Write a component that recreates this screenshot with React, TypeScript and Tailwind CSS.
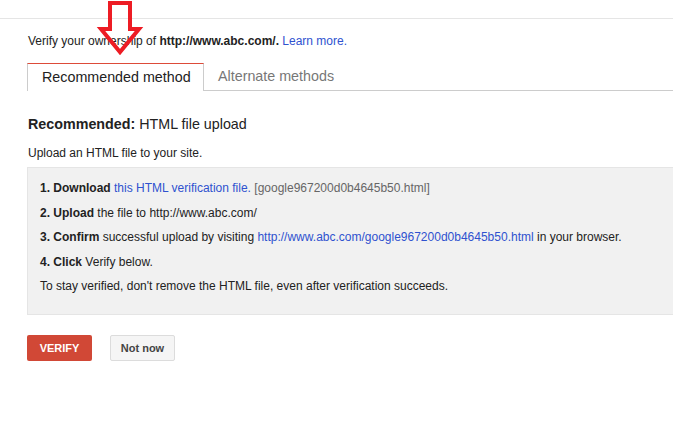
import React from "react";

const link = "text-[#2f52cf]";

const App = () => {
  return (
    <div className="relative min-h-[438px] w-[673px] bg-white font-['Liberation_Sans',Arial,sans-serif] text-[12px] text-[#222]">
      <div className="h-[19px] border-b border-[#e5e5e5]" />

      <svg
        className="absolute left-[96px] top-0"
        width="48"
        height="58"
        viewBox="0 0 48 58"
        fill="none"
      >
        <path
          d="M14 3 H34 V29 H43 L24 52 L5 29 H14 Z"
          stroke="#ed1c24"
          strokeWidth="4"
          strokeLinejoin="miter"
        />
      </svg>

      <div className="pl-[28px] pt-[14px]">
        <p className="leading-4">
          Verify your ownership of <b>http://www.abc.com/.</b>{" "}
          <span className={link}>Learn more.</span>
        </p>
      </div>

      <div className="ml-[27px] mt-[14px] flex h-[28px] border-b border-[#cccccc]">
        <div className="-mb-px flex w-[177px] items-center border-x border-t border-[#cccccc] border-t-[#dd4b39] bg-white pl-[14px] text-[14.3px] text-[#222]">
          Recommended method
        </div>
        <div className="flex items-center pl-[14px] text-[14.3px] text-[#777]">
          Alternate methods
        </div>
      </div>

      <div className="pl-[28px] pt-[24px]">
        <h2 className="text-[14.3px] leading-[18px]">
          <b>Recommended:</b> HTML file upload
        </h2>
        <p className="mt-[12px] leading-4">Upload an HTML file to your site.</p>
      </div>

      <div className="ml-[27px] mt-[6px] border-y border-l border-[#e5e5e5] bg-[#f1f1f1] pb-[20px] pl-3 pt-3">
        <div className="flex flex-col gap-[8.5px] leading-4">
          <p>
            <b>1. Download</b> <span className={link}>this HTML verification file.</span>{" "}
            <span className="text-[#666]">[google967200d0b4645b50.html]</span>
          </p>
          <p>
            <b>2. Upload</b> the file to http://www.abc.com/
          </p>
          <p>
            <b>3. Confirm</b> successful upload by visiting{" "}
            <span className={link}>http://www.abc.com/google967200d0b4645b50.html</span> in your
            browser.
          </p>
          <p>
            <b>4. Click</b> Verify below.
          </p>
          <p>To stay verified, don't remove the HTML file, even after verification succeeds.</p>
        </div>
      </div>

      <div className="ml-[27px] mt-[20px] flex gap-[18px]">
        <button className="h-[26px] w-[65px] rounded-[2px] bg-[#d14836] text-[11px] font-bold text-white">
          VERIFY
        </button>
        <button className="h-[26px] w-[65px] rounded-[2px] border border-[#dcdcdc] bg-[#f5f5f5] text-[11px] font-bold text-[#444]">
          Not now
        </button>
      </div>
    </div>
  );
};

export default App;
